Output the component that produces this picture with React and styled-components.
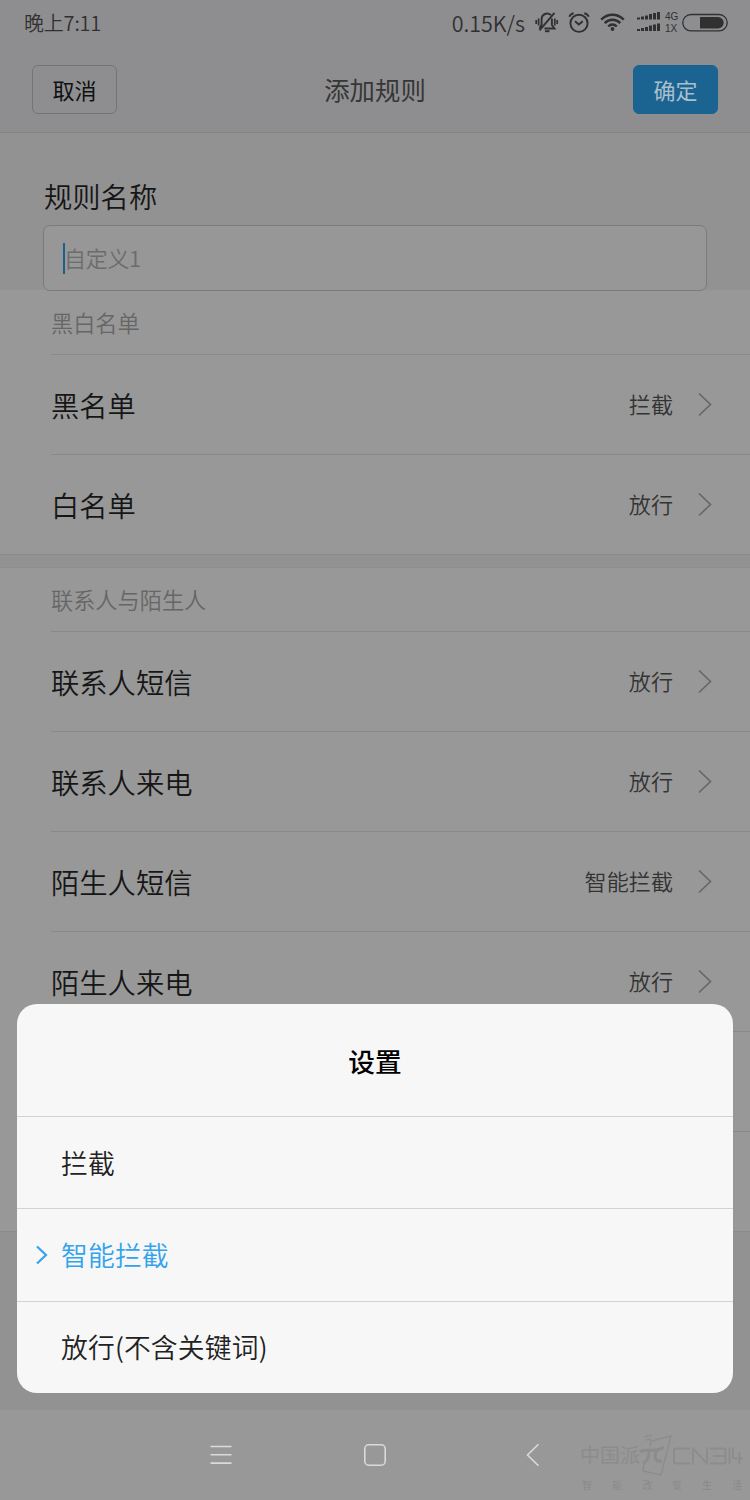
import React from 'react'
import styled, { createGlobalStyle, css } from 'styled-components'

const GlobalStyle = createGlobalStyle`
  * {
    box-sizing: border-box;
  }
  body {
    margin: 0;
    font-family: 'Noto Sans CJK SC', 'Noto Sans', sans-serif;
    font-weight: 350;
  }
`

const Screen = styled.div`
  position: relative;
  display: flex;
  flex-direction: column;
  width: 750px;
  height: 1500px;
  overflow: hidden;
  background: #929292;
`

const TopArea = styled.header`
  flex: none;
  height: 133px;
  background: #8e8e90;
  border-bottom: 1px solid #858587;
`

const StatusBar = styled.div`
  display: flex;
  align-items: center;
  height: 46px;
  padding: 0 22px 0 24px;
  color: #303031;
  font-size: 20px;
  line-height: 46px;
`

const Clock = styled.span`
  letter-spacing: -0.2px;
`

const Speed = styled.span`
  margin-left: auto;
  margin-right: 10px;
  font-size: 21.5px;
`

const StatusIcon = styled.svg`
  flex: none;
  display: block;
  width: ${({ $w }) => $w}px;
  height: 24px;
  margin-right: ${({ $gap = 0 }) => $gap}px;
`

const Network = styled.div`
  display: flex;
  flex-direction: column;
  width: 17px;
  font-family: 'Liberation Sans', sans-serif;
  font-size: 10px;
  line-height: 12px;
`

const TitleBar = styled.div`
  display: flex;
  align-items: center;
  justify-content: space-between;
  height: 86px;
  padding: 0 32px;
`

const Title = styled.h1`
  margin: 0;
  color: #363637;
  font-size: 25.4px;
  font-weight: 400;
`

const Button = styled.button`
  width: 85px;
  height: 49px;
  padding: 0;
  border: 1px solid #747476;
  border-radius: 6px;
  background: transparent;
  color: #101011;
  font-family: inherit;
  font-size: 22px;
  font-weight: 400;
  line-height: 46px;

  ${({ $primary }) =>
    $primary &&
    css`
      border-color: #1b638f;
      background: #1b6492;
      color: #a9bfcd;
    `}
`

const NameField = styled.div`
  flex: none;
  height: 157px;
  padding: 42px 43px 0;
`

const FieldLabel = styled.div`
  height: 50px;
  padding-left: 1px;
  color: #161616;
  font-size: 28.3px;
  line-height: 42px;
`

const Input = styled.div`
  position: relative;
  z-index: 1;
  display: flex;
  align-items: center;
  height: 66px;
  padding-left: 19px;
  border: 1px solid #7b7b7b;
  border-radius: 7px;
  background: #979797;
  color: #6c6c6c;
  font-size: 22px;
  line-height: 62px;
`

const Caret = styled.span`
  width: 2px;
  height: 31px;
  margin-right: -1px;
  background: #17608f;
`

const Placeholder = styled.span`
  height: 64px;
  letter-spacing: -0.3px;
`

const Group = styled.section`
  flex: none;
  padding-left: 51px;
  background: #989898;
  border-bottom: 1px solid #8b8b8b;

  & + & {
    margin-top: 12px;
    border-top: 1px solid #8d8d8d;
  }
`

const GroupTitle = styled.div`
  height: 64px;
  color: #666;
  font-size: 22.2px;
  line-height: 64px;

  ${Group} + ${Group} & {
    height: 63px;
    line-height: 63px;
  }
`

const Row = styled.div`
  display: flex;
  align-items: center;
  height: 100px;
  padding-right: 38px;
  border-top: 1px solid #898989;
`

const RowLabel = styled.span`
  flex: 1;
  color: #161616;
  font-size: 28.3px;
`

const RowValue = styled.span`
  margin-right: 25px;
  padding-bottom: 4px;
  color: #333;
  font-size: 22.1px;
`

const Sheet = styled.div`
  position: absolute;
  left: 17px;
  top: 1004px;
  width: 716px;
  height: 389px;
  overflow: hidden;
  border-radius: 20px;
  background: #f7f7f7;
`

const SheetTitle = styled.h2`
  height: 112px;
  margin: 0;
  color: #000;
  font-size: 26.7px;
  font-weight: 500;
  line-height: 114px;
  text-align: center;
`

const Option = styled.div`
  display: flex;
  align-items: center;
  height: 92.3px;
  border-top: 1px solid #d2d2d2;
  color: ${({ $selected }) => ($selected ? '#33a3ed' : '#222')};
  font-size: 26.8px;
  letter-spacing: 0.15px;
  line-height: 90px;
`

const Mark = styled.div`
  display: flex;
  width: 44px;
  padding-left: 19px;
`

const NavBar = styled.nav`
  display: flex;
  align-items: center;
  height: 90px;
  margin-top: auto;
  background: #989898;
`

const NavIcons = styled.svg`
  flex: none;
  display: block;
`

const Watermark = styled.svg`
  display: block;
`

const blacklist = [
  { label: '黑名单', value: '拦截' },
  { label: '白名单', value: '放行' },
]

// the last two rows stay behind the sheet
const contacts = [
  { label: '联系人短信', value: '放行' },
  { label: '联系人来电', value: '放行' },
  { label: '陌生人短信', value: '智能拦截' },
  { label: '陌生人来电', value: '放行' },
  {},
  {},
]

const options = ['拦截', '智能拦截', '放行(不含关键词)']

function MuteIcon() {
  return (
    <StatusIcon $w={24} $gap={9} viewBox="0 0 24 24" fill="none" stroke="#303031" strokeWidth="1.900">
      <path d="M16 4C12 1 6.800 3 6.600 8v5.500L4.500 17.500M19.500 1.800 4.500 19.300M9.500 17.500h10l-2.600-3.500V7.500" />
      <path d="M10 20.200h4.500" strokeWidth="2" />
      <path d="M3.600 7.500v7M1.200 9v4M19.800 7.500v7M22.200 9v4" strokeWidth="1.700" />
    </StatusIcon>
  )
}

function AlarmIcon() {
  return (
    <StatusIcon $w={22} $gap={10} viewBox="0 0 22 24" fill="none" stroke="#303031" strokeWidth="1.900">
      <circle cx="11" cy="12.300" r="8.600" />
      <path d="M7 10.300l3.800 3.200 4-3.200M1.300 5.800C2 3.800 3.500 2.600 5.700 2.200M20.700 5.800c-.7-2-2.200-3.200-4.400-3.600" />
    </StatusIcon>
  )
}

function WifiIcon() {
  return (
    <StatusIcon $w={25} $gap={12} viewBox="0 0 25 24" fill="none" stroke="#303031" strokeWidth="2.400">
      <path d="M1.200 8.600c6.500-6.500 16-6.500 22.600 0M4.700 12.100c4.500-4.500 11-4.500 15.600 0M8.200 15.500c2.500-2.600 6-2.600 8.600 0" />
      <circle cx="12.500" cy="18" r="1.900" fill="#303031" stroke="none" />
    </StatusIcon>
  )
}

function SignalIcon() {
  const bars = [
    [0, 2],
    [4, 3],
    [8, 4],
    [12, 5.5],
    [16, 6.5],
    [20, 7.5],
  ]
  return (
    <StatusIcon $w={24} $gap={4} viewBox="0 0 24 24" fill="#303031">
      {[8.5, 20].map((base) =>
        bars.map(([x, h]) => (
          <rect key={`${base}-${x}`} x={x} y={base - h} width="3" height={h} />
        )),
      )}
    </StatusIcon>
  )
}

function BatteryIcon() {
  return (
    <StatusIcon $w={46} viewBox="0 0 46 24">
      <rect x=".8" y="3.500" width="44.400" height="16.400" rx="8.200" fill="none" stroke="#303031" strokeWidth="1.300" />
      <path d="M18 6h18a5.700 5.700 0 0 1 0 11.400H18z" fill="#303031" />
    </StatusIcon>
  )
}

function Chevron() {
  return (
    <svg width="14" height="24" viewBox="0 0 14 24" fill="none" stroke="#666" strokeWidth="1.600">
      <path d="M1 .5 12.500 11.500 1 22.500" />
    </svg>
  )
}

function Rows({ items }) {
  return items.map((item, i) => (
    <Row key={i}>
      {item.label && (
        <>
          <RowLabel>{item.label}</RowLabel>
          <RowValue>{item.value}</RowValue>
          <Chevron />
        </>
      )}
    </Row>
  ))
}

function SiteMark() {
  return (
    <Watermark width="170" height="90" viewBox="0 0 170 90" fill="#8c8c8c">
      <text
        x="0"
        y="53"
        fontSize="20"
        fontWeight="400"
        fontFamily="'Liberation Serif', 'Noto Sans CJK SC', serif"
      >
        中国派
      </text>
      <g fill="none" stroke="#8c8c8c">
        <path d="M71 31l20-5-10 39-18-4 1-7M71 31l-1 5M64 27l8-2M66 30l5-1" strokeWidth="1.400" />
        <path d="M60 42c7-5 14 2 24-5M69 41c0 7-3 11-6 12M77 40c-3 7-3 12 5 11" strokeWidth="3" />
        <path
          d="M110 38.500H96q-2 0-2 2v11q0 2 2 2h14M113 54.500V38.500l14 15V37.500M130 38.500h14q1.500 0 1.500 2v11q0 2-1.500 2h-14M133 46h12M149.500 37.500v17M153 37.500v9q0 2 2 2h8M159.500 42v12.500"
          strokeWidth="1.800"
        />
      </g>
      <text x="2 32 62.500 92 122 152" y="79" fontSize="10" fill="#888">
        智能改变生活
      </text>
    </Watermark>
  )
}

function App() {
  return (
    <>
      <GlobalStyle />
      <Screen>
        <TopArea>
          <StatusBar>
            <Clock>晚上7:11</Clock>
            <Speed>0.15K/s</Speed>
            <MuteIcon />
            <AlarmIcon />
            <WifiIcon />
            <SignalIcon />
            <Network>
              <span>4G</span>
              <span>1X</span>
            </Network>
            <BatteryIcon />
          </StatusBar>
          <TitleBar>
            <Button>取消</Button>
            <Title>添加规则</Title>
            <Button $primary>确定</Button>
          </TitleBar>
        </TopArea>

        <NameField>
          <FieldLabel>规则名称</FieldLabel>
          <Input>
            <Caret />
            <Placeholder>自定义1</Placeholder>
          </Input>
        </NameField>

        <Group>
          <GroupTitle>黑白名单</GroupTitle>
          <Rows items={blacklist} />
        </Group>
        <Group>
          <GroupTitle>联系人与陌生人</GroupTitle>
          <Rows items={contacts} />
        </Group>

        <NavBar>
          <NavIcons width="580" height="90" viewBox="0 0 580 90" fill="none" stroke="#dadada" strokeWidth="1.600">
            <path d="M210.500 36.500h21M210.500 44.800h21M210.500 53.100h21" />
            <rect x="364.800" y="34.800" width="20.400" height="20.400" rx="4" />
            <path d="M538.500 34.300 527.500 45l11 10.700" />
          </NavIcons>
          <SiteMark />
        </NavBar>

        <Sheet>
          <SheetTitle>设置</SheetTitle>
          {options.map((text, i) => (
            <Option key={text} $selected={i === 1}>
              <Mark>
                {i === 1 && (
                  <svg width="12" height="20" viewBox="0 0 12 20" fill="none" stroke="#33a3ed" strokeWidth="2.200">
                    <path d="M1 1.500 10 10l-9 8.500" />
                  </svg>
                )}
              </Mark>
              {text}
            </Option>
          ))}
        </Sheet>
      </Screen>
    </>
  )
}

export default App
